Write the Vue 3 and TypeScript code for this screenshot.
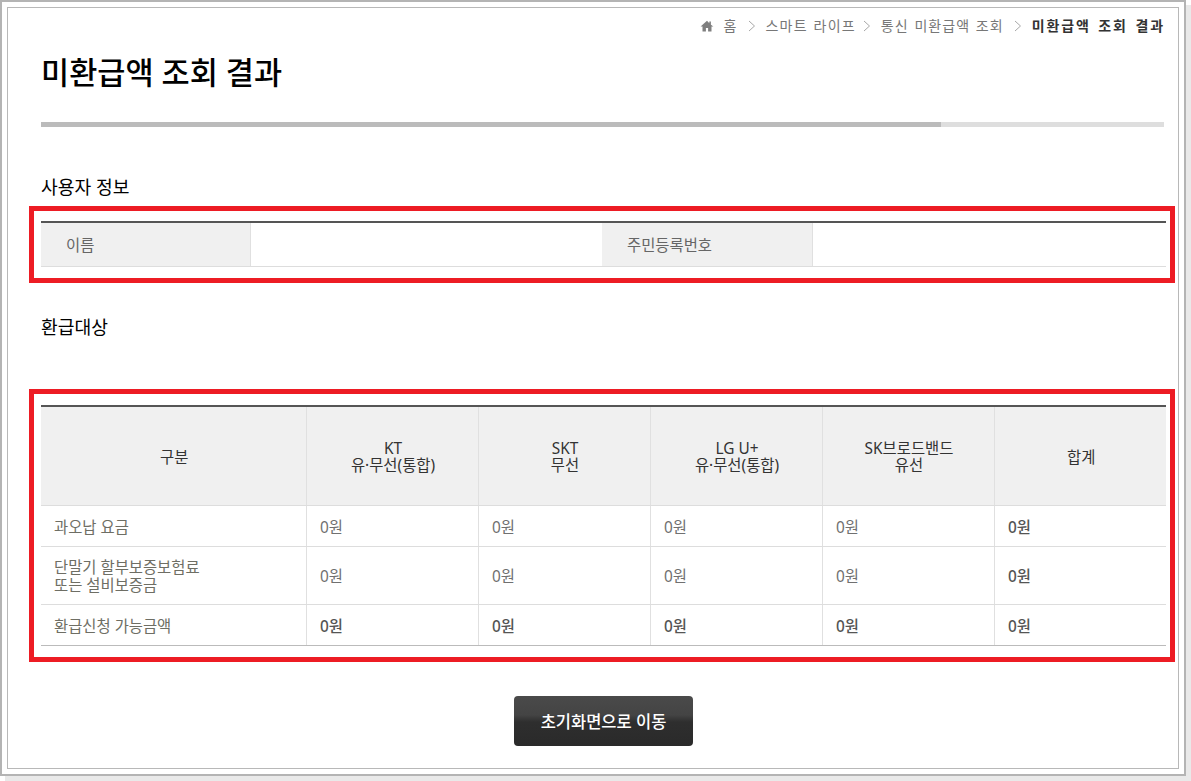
<script setup lang="ts">
const crumbs: string[] = ['스마트 라이프', '통신 미환급액 조회']

interface Row {
  label: string[]
  values: string[]
  strong: boolean
}

const heads: string[][] = [
  ['KT', '유·무선(통합)'],
  ['SKT', '무선'],
  ['LG U+', '유·무선(통합)'],
  ['SK브로드밴드', '유선'],
  ['합계'],
]

const rows: Row[] = [
  { label: ['과오납 요금'], values: ['0원', '0원', '0원', '0원', '0원'], strong: false },
  { label: ['단말기 할부보증보험료', '또는 설비보증금'], values: ['0원', '0원', '0원', '0원', '0원'], strong: false },
  { label: ['환급신청 가능금액'], values: ['0원', '0원', '0원', '0원', '0원'], strong: true },
]
</script>

<template>
  <div class="shell">
    <div class="outer">
      <main class="inner">
        <nav class="crumbs">
          <svg class="home" width="14" height="12" viewBox="0 0 14 12" aria-hidden="true">
            <path d="M7 .8 .6 6.6h1.9V11.6h3.4V8h2.2v3.6h3.4V6.6h1.9L10.9 4.7V1.6H9.3V3.3z" fill="#7f7f7f" />
          </svg>
          <span class="crumb home-label">홈</span>
          <template v-for="(c, i) in crumbs" :key="c">
            <svg class="sep" width="8" height="12" viewBox="0 0 8 12" aria-hidden="true"><path d="M1 1l5.5 5L1 11" fill="none" stroke="#a8a8a8" stroke-width="1" /></svg>
            <span class="crumb" :class="{ tight: i === 0 }">{{ c }}</span>
          </template>
          <svg class="sep" width="8" height="12" viewBox="0 0 8 12" aria-hidden="true"><path d="M1 1l5.5 5L1 11" fill="none" stroke="#a8a8a8" stroke-width="1" /></svg>
          <strong class="crumb current">미환급액 조회 결과</strong>
        </nav>

        <h1 class="title">미환급액 조회 결과</h1>
        <div class="bar"><div class="bar-fill"></div></div>

        <h2 class="section first">사용자 정보</h2>
        <table class="info">
          <colgroup>
            <col style="width: 209px" />
            <col style="width: 352px" />
            <col style="width: 210px" />
            <col />
          </colgroup>
          <tbody>
            <tr>
              <th>이름</th>
              <td></td>
              <th>주민등록번호</th>
              <td></td>
            </tr>
          </tbody>
        </table>

        <h2 class="section second">환급대상</h2>
        <table class="refund">
          <colgroup>
            <col style="width: 265px" />
            <col v-for="n in 5" :key="n" style="width: 172px" />
          </colgroup>
          <thead>
            <tr>
              <th>구분</th>
              <th v-for="h in heads" :key="h.join()" :class="{ two: h.length > 1 }">
                <div v-for="line in h" :key="line">{{ line }}</div>
              </th>
            </tr>
          </thead>
          <tbody>
            <tr v-for="r in rows" :key="r.label[0]">
              <td class="label">
                <div v-for="line in r.label" :key="line">{{ line }}</div>
              </td>
              <td
                v-for="(v, i) in r.values"
                :key="i"
                class="val"
                :class="{ bold: r.strong || i === 4 }"
              >{{ v }}</td>
            </tr>
          </tbody>
        </table>

        <div class="actions">
          <button type="button" class="btn">초기화면으로 이동</button>
        </div>
      </main>
    </div>
    <div class="mark mark-a"></div>
    <div class="mark mark-b"></div>
  </div>
</template>

<style>
html, body { background: #fff; }
</style>

<style scoped>
.shell {
  position: relative;
  width: 1191px;
  height: 781px;
  overflow: hidden;
  font-family: "Noto Sans", "Noto Sans CJK KR", sans-serif;
  color: #666;
}
.outer {
  box-sizing: border-box;
  width: 1186px;
  height: 776px;
  border: 2px solid #b4b4b4;
  padding: 5px;
  box-shadow: 5px 5px 0 #e9e9e9;
  background: #fff;
}
.inner {
  box-sizing: border-box;
  height: 100%;
  border: 1px solid #b8b8b8;
  padding: 0 14px 0 33px;
}
.crumbs {
  display: flex;
  justify-content: flex-end;
  align-items: center;
  height: 20px;
  margin-top: 8px;
  font-size: 14px;
  line-height: 20px;
  color: #777;
  white-space: nowrap;
}
.crumb { letter-spacing: 1.05px; word-spacing: 1px; }
.crumb.tight { letter-spacing: 1.2px; margin-right: -3px; }
.home { margin-right: 10px; }
.sep { margin: 0 10px; }
.current { color: #333; font-weight: 700; letter-spacing: 1.9px; word-spacing: 2px; margin-right: -1px; }
.title {
  margin: 14px 0 0;
  font-size: 30.6px;
  line-height: 44px;
  font-weight: 500;
  color: #000;
}
.bar {
  height: 5px;
  margin-top: 28px;
  background: #dedede;
}
.bar-fill { width: 900px; height: 100%; background: #bbb; }
.section {
  margin: 0;
  font-size: 18.2px;
  line-height: 26px;
  font-weight: 400;
  color: #000;
}
.section.first { margin-top: 47px; }
.section.second { margin-top: 47px; }
table {
  border-collapse: collapse;
  table-layout: fixed;
  width: 1125px;
}
.info { margin-top: 21px; border-top: 2px solid #555; }
.info th {
  background: #f0f0f0;
  height: 43px;
  padding: 0 0 0 25px;
  text-align: left;
  font-size: 15.4px;
  font-weight: 400;
  color: #666;
  border-right: 1px solid #e0e0e0;
  border-bottom: 1px solid #ddd;
}
.info td { border-bottom: 1px solid #ddd; padding: 0; }
.refund { margin-top: 65px; border-top: 2px solid #555; }
.refund th {
  box-sizing: border-box;
  height: 99px;
  background: #f0f0f0;
  font-size: 15.4px;
  line-height: 17px;
  font-weight: 400;
  color: #333;
  text-align: center;
  padding: 4px 0 0 2px;
  border-right: 1px solid #e0e0e0;
  border-bottom: 1px solid #ddd;
}
.refund th.two { padding-top: 2px; }
.refund th:last-child, .refund td:last-child { border-right: 0; }
.refund td {
  box-sizing: border-box;
  height: 41px;
  padding: 4px 0 0 13px;
  font-size: 15.4px;
  line-height: 18px;
  color: #6e6e64;
  border-right: 1px solid #e0e0e0;
  border-bottom: 1px solid #ddd;
}
.refund tbody tr:nth-child(2) td { height: 58px; }
.refund tbody tr:last-child td { border-bottom-color: #bbb; }
.refund td.val { color: #707070; padding-left: 13.5px; }
.refund td.bold { font-weight: 500; color: #555; }
.actions {
  display: flex;
  justify-content: center;
  margin-top: 50px;
  padding-left: 2px;
}
.btn {
  width: 179px;
  height: 50px;
  border: 0;
  border-radius: 4px;
  padding: 0;
  background: linear-gradient(#4a4a4a 0%, #444 38%, #2e2e2e 52%, #2a2a2a 100%);
  font-family: inherit;
  font-size: 16.5px;
  font-weight: 500;
  color: #fff;
}
.mark {
  position: absolute;
  left: 29px;
  width: 1146px;
  box-sizing: border-box;
  border: 5px solid #ed1c24;
  pointer-events: none;
}
.mark-a { top: 206px; height: 77px; }
.mark-b { top: 389px; height: 273px; }
</style>
